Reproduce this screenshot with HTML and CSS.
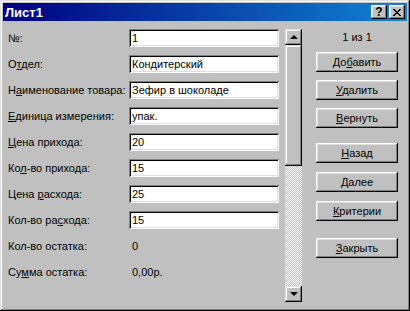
FILE: index.html
```html
<!DOCTYPE html>
<html lang="ru">

<head>
    <meta charset="UTF-8">
    <title>Лист1</title>
    <link rel="stylesheet" href="styles.css">
</head>

<body>

    <div class="window">
        <div class="titlebar">
            <span class="title">Лист1</span>
            <div class="title-buttons">
                <span class="tbtn">?</span>
                <span class="tbtn">
                    <svg width="8" height="7" viewBox="0 0 8 7">
                        <path d="M0 0h2v1h1v1h2v-1h1v-1h2v1h-1v1h-1v1h-1v1h1v1h1v1h1v1h-2v-1h-1v-1h-2v1h-1v1h-2v-1h1v-1h1v-1h1v-1h-1v-1h-1v-1h-1z" fill="#000"/>
                    </svg>
                </span>
            </div>
        </div>

        <div class="content">
            <div class="fields">
                <div class="label">№:</div>
                <div class="input">1</div>

                <div class="label">О<u>т</u>дел:</div>
                <div class="input">Кондитерский</div>

                <div class="label">Н<u>а</u>именование товара:</div>
                <div class="input">Зефир в шоколаде</div>

                <div class="label"><u>Е</u>диница измерения:</div>
                <div class="input">упак.</div>

                <div class="label"><u>Ц</u>ена прихода:</div>
                <div class="input">20</div>

                <div class="label">Ко<u>л</u>-во прихода:</div>
                <div class="input">15</div>

                <div class="label">Цена <u>р</u>асхода:</div>
                <div class="input">25</div>

                <div class="label">Кол-во ра<u>с</u>хода:</div>
                <div class="input">15</div>

                <div class="label">Кол-во остатка:</div>
                <div class="value">0</div>

                <div class="label">Су<u>м</u>ма остатка:</div>
                <div class="value">0,00р.</div>
            </div>

            <div class="scrollbar">
                <div class="sb-btn"><span class="arrow-up"></span></div>
                <div class="sb-thumb"></div>
                <div class="sb-track"></div>
                <div class="sb-btn"><span class="arrow-down"></span></div>
            </div>

            <div class="actions">
                <div class="counter">1 из 1</div>
                <div class="btn first">До<u>б</u>авить</div>
                <div class="btn"><u>У</u>далить</div>
                <div class="btn"><u>В</u>ернуть</div>
                <div class="btn group"><u>Н</u>азад</div>
                <div class="btn next"><u>Д</u>алее</div>
                <div class="btn next"><u>К</u>ритерии</div>
                <div class="btn close"><u>З</u>акрыть</div>
            </div>
        </div>
    </div>

</body>

</html>
```

FILE: styles.css
```css
body {
    margin: 0;
    padding: 0;
    font-family: 'Liberation Sans', Arial, sans-serif;
    font-size: 11px;
    color: #000;
    background-color: #c0c0c0;
}

.window {
    width: 410px;
    height: 311px;
    box-sizing: border-box;
    padding: 3px;
    background-color: #c0c0c0;
    box-shadow: inset -1px -1px #000, inset 1px 1px #dfdfdf,
        inset -2px -2px #808080, inset 2px 2px #fff;
}

.titlebar {
    height: 18px;
    display: flex;
    align-items: center;
    justify-content: space-between;
    padding: 0 2px 0 2px;
    background: linear-gradient(to right, #000080, #1084d0);
}

.title {
    color: #fff;
    font-weight: bold;
    font-size: 13px;
}

.title-buttons {
    display: flex;
    gap: 2px;
}

.tbtn {
    width: 16px;
    height: 14px;
    box-sizing: border-box;
    display: flex;
    align-items: center;
    justify-content: center;
    background-color: #c0c0c0;
    font-weight: bold;
    font-size: 12px;
    box-shadow: inset -1px -1px #000, inset 1px 1px #fff,
        inset -2px -2px #808080, inset 2px 2px #dfdfdf;
}

.content {
    display: flex;
    padding: 8px 0 0 5px;
}

.fields {
    display: grid;
    grid-template-columns: 121px 150px;
    grid-auto-rows: 18px;
    row-gap: 8px;
}

.label {
    line-height: 18px;
    white-space: nowrap;
}

.input {
    background-color: #fff;
    padding-left: 3px;
    line-height: 18px;
    box-shadow: inset 1px 1px #808080, inset -1px -1px #fff,
        inset 2px 2px #000, inset -2px -2px #dfdfdf;
}

.value {
    padding-left: 3px;
    line-height: 18px;
}

.scrollbar {
    margin-left: 6px;
    width: 17px;
    height: 273px;
    display: flex;
    flex-direction: column;
}

.sb-btn,
.sb-thumb {
    background-color: #c0c0c0;
    box-shadow: inset -1px -1px #000, inset 1px 1px #dfdfdf,
        inset -2px -2px #808080, inset 2px 2px #fff;
}

.sb-btn {
    height: 16px;
    display: flex;
    align-items: center;
    justify-content: center;
}

.sb-thumb {
    height: 121px;
}

.sb-track {
    flex: 1;
    background: repeating-conic-gradient(#fff 0 25%, #c0c0c0 0 50%) 0 0 / 2px 2px;
}

.arrow-up,
.arrow-down {
    width: 0;
    height: 0;
    border-left: 4px solid transparent;
    border-right: 4px solid transparent;
}

.arrow-up {
    border-bottom: 4px solid #000;
}

.arrow-down {
    border-top: 4px solid #000;
}

.actions {
    margin-left: 14px;
    width: 82px;
    display: flex;
    flex-direction: column;
}

.counter {
    text-align: center;
    line-height: 16px;
}

.btn {
    height: 20px;
    line-height: 20px;
    text-align: center;
    margin-top: 8px;
    background-color: #c0c0c0;
    box-shadow: inset -1px -1px #000, inset 1px 1px #fff,
        inset -2px -2px #808080, inset 2px 2px #dfdfdf;
}

.btn.first {
    margin-top: 7px;
}

.btn.group {
    margin-top: 15px;
}

.btn.next {
    margin-top: 9px;
}

.btn.close {
    margin-top: 17px;
}
```
